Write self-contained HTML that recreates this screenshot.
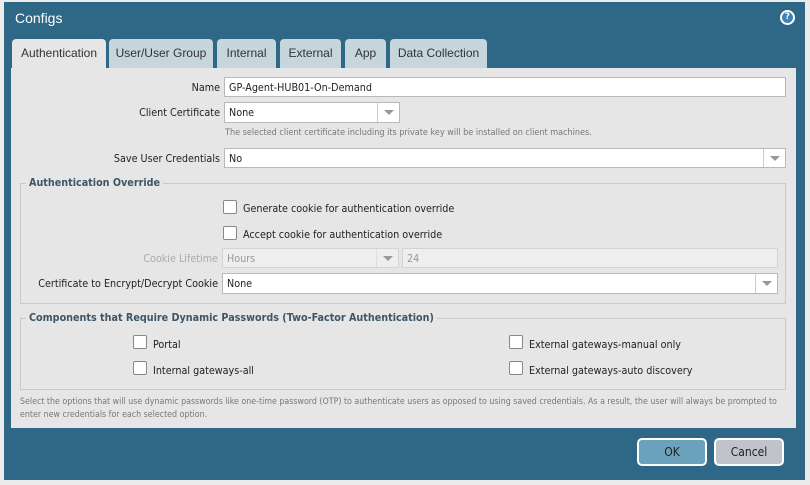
<!DOCTYPE html>
<html><head><style>
*{box-sizing:border-box;margin:0;padding:0}
body{width:810px;height:485px;background:#ececec;position:relative;overflow:hidden;font-family:"DejaVu Sans Condensed","Liberation Sans",sans-serif;font-size:10.7px;color:#222}
.a{position:absolute}
#frame{left:4px;top:2px;width:801px;height:478px;background:#2f6886}
.tab{position:absolute;top:39px;height:29px;background:#c7d5dc;border-radius:4px 4px 0 0;text-align:center;line-height:29px;font-size:12px;color:#333;font-family:"Liberation Sans",sans-serif}
.tab.on{background:#e6e6e6;height:30px}
#panel{left:11px;top:68px;width:785px;height:360px;background:#e6e6e6}
.lbl{position:absolute;text-align:right;white-space:nowrap}
.inp{position:absolute;background:#fff;border:1px solid #b9b9b9;padding-left:4px;line-height:20px;white-space:nowrap}
.dd{position:absolute;top:0;right:0;width:22px;height:100%;border-left:1px solid #ccc}
.dd:after{content:"";position:absolute;left:6px;top:7px;border-left:5px solid transparent;border-right:5px solid transparent;border-top:5px solid #999}
.fs{position:absolute;border:1px solid #c9c9c9}
.lg{position:absolute;background:#e6e6e6;font-weight:bold;color:#3d5566;padding:0 3px;white-space:nowrap}
.cb{position:absolute;width:14px;height:14px;background:#fff;border:1px solid #888;border-radius:2px}
.t{position:absolute;white-space:nowrap}
.note{position:absolute;font-size:9px;color:#777;white-space:nowrap}
.btn{position:absolute;top:438px;width:70px;height:28px;border:2px solid #fff;border-radius:5px;text-align:center;line-height:24px;font-size:12px}
</style></head><body>
<div id="frame" class="a"></div>
<div class="a" style="left:15px;top:10px;color:#fff;font-size:14px;font-family:'Liberation Sans',sans-serif">Configs</div>
<div class="a" style="left:780px;top:10px;width:15px;height:15px;border-radius:50%;background:#3a84b8;border:2px solid #fff;color:#fff;font-size:9px;font-weight:bold;text-align:center;line-height:11px">?</div>
<div class="tab on" style="left:12px;width:94px">Authentication</div>
<div class="tab" style="left:109px;width:104px">User/User Group</div>
<div class="tab" style="left:217px;width:59px">Internal</div>
<div class="tab" style="left:280px;width:61px">External</div>
<div class="tab" style="left:345px;width:41px">App</div>
<div class="tab" style="left:390px;width:97px">Data Collection</div>
<div id="panel" class="a"></div>

<div class="lbl" style="right:590px;top:81px">Name</div>
<div class="inp" style="left:224px;top:77px;width:562px;height:20px;line-height:19px">GP-Agent-HUB01-On-Demand</div>
<div class="lbl" style="right:590px;top:106px">Client Certificate</div>
<div class="inp" style="left:224px;top:102px;width:176px;height:21px">None<div class="dd"></div></div>
<div class="note" style="left:225px;top:128px">The selected client certificate including its private key will be installed on client machines.</div>
<div class="lbl" style="right:590px;top:152px">Save User Credentials</div>
<div class="inp" style="left:224px;top:148px;width:562px;height:20px;line-height:19px">No<div class="dd"></div></div>

<div class="fs" style="left:20px;top:183px;width:766px;height:121px"></div>
<div class="lg" style="left:26px;top:176px">Authentication Override</div>
<div class="cb" style="left:223px;top:200px"></div><div class="t" style="left:243px;top:202px">Generate cookie for authentication override</div>
<div class="cb" style="left:223px;top:226px"></div><div class="t" style="left:243px;top:228px">Accept cookie for authentication override</div>
<div class="lbl" style="right:592px;top:252px;color:#aaa">Cookie Lifetime</div>
<div class="inp" style="left:222px;top:248px;width:177px;height:20px;line-height:19px;background:#eee;border-color:#d4d4d4;color:#999">Hours<div class="dd" style="border-color:#ddd"></div></div>
<div class="inp" style="left:402px;top:248px;width:376px;height:20px;line-height:19px;background:#eee;border-color:#d4d4d4;color:#999">24</div>
<div class="lbl" style="right:592px;top:277px">Certificate to Encrypt/Decrypt Cookie</div>
<div class="inp" style="left:222px;top:273px;width:556px;height:21px">None<div class="dd"></div></div>

<div class="fs" style="left:20px;top:318px;width:766px;height:72px"></div>
<div class="lg" style="left:26px;top:311px">Components that Require Dynamic Passwords (Two-Factor Authentication)</div>
<div class="cb" style="left:133px;top:335px"></div><div class="t" style="left:153px;top:338px">Portal</div>
<div class="cb" style="left:133px;top:361px"></div><div class="t" style="left:153px;top:364px">Internal gateways-all</div>
<div class="cb" style="left:509px;top:335px"></div><div class="t" style="left:529px;top:338px">External gateways-manual only</div>
<div class="cb" style="left:509px;top:361px"></div><div class="t" style="left:529px;top:364px">External gateways-auto discovery</div>
<div class="note" style="left:20px;top:397px;font-size:8.8px">Select the options that will use dynamic passwords like one-time password (OTP) to authenticate users as opposed to using saved credentials. As a result, the user will always be prompted to</div>
<div class="note" style="left:20px;top:410px;font-size:8.8px">enter new credentials for each selected option.</div>

<div class="btn" style="left:637px;background:#6aa1bb">OK</div>
<div class="btn" style="left:714px;background:#c0c3ca">Cancel</div>
</body></html>
